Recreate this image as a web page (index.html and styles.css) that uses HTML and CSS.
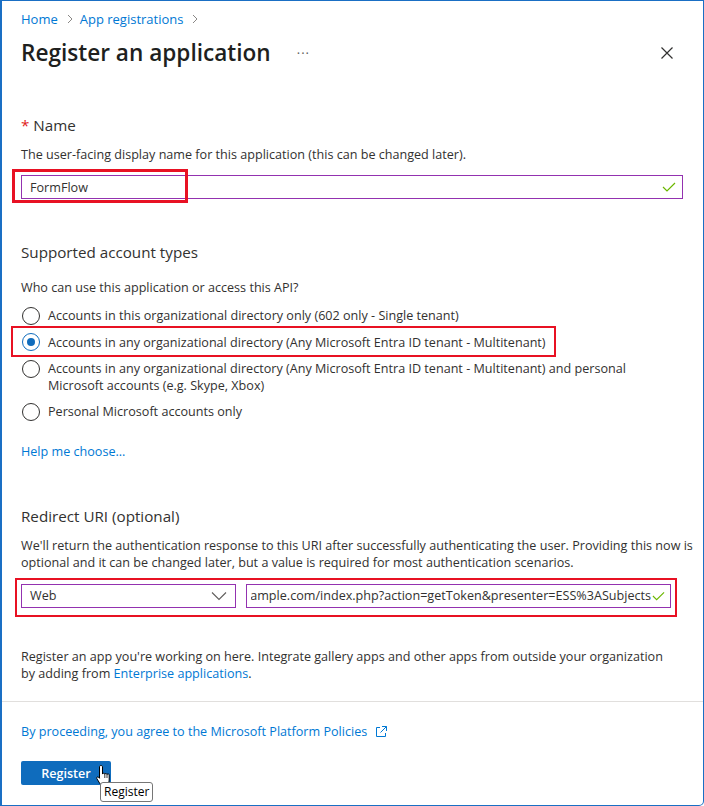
FILE: index.html
```html
<!DOCTYPE html>
<html lang="en">
<head>
<meta charset="utf-8">
<title>Register an application</title>
<link rel="stylesheet" href="styles.css">
</head>
<body>
<div class="window">
  <header class="head">
    <nav class="crumbs">
      <a class="link">Home</a>
      <svg class="chev" width="8" height="12" viewBox="0 0 8 12"><polyline points="2,2 6,6 2,10" fill="none" stroke="#8a8886" stroke-width="1"/></svg>
      <a class="link">App registrations</a>
      <svg class="chev" width="8" height="12" viewBox="0 0 8 12"><polyline points="2,2 6,6 2,10" fill="none" stroke="#8a8886" stroke-width="1"/></svg>
    </nav>
    <div class="title-row">
      <h1 class="title">Register an application</h1>
      <span class="more">···</span>
      <span class="spacer"></span>
      <svg class="close" width="14" height="14" viewBox="0 0 14 14"><path d="M1.5 1.5 L12.5 12.5 M12.5 1.5 L1.5 12.5" stroke="#323130" stroke-width="1.2" fill="none"/></svg>
    </div>
  </header>

  <main class="content">
    <section class="sec sec-name">
      <h2 class="label"><span class="req">*</span> Name</h2>
      <p class="desc">The user-facing display name for this application (this can be changed later).</p>
      <div class="field">
        <div class="input">
          <span class="val">FormFlow</span>
          <svg class="ok" width="14" height="10" viewBox="0 0 14 10"><polyline points="1,5 5,9 13,1" fill="none" stroke="#6bb700" stroke-width="1.2"/></svg>
        </div>
        <span class="hl hl-name"></span>
      </div>
    </section>

    <section class="sec sec-types">
      <h2 class="label">Supported account types</h2>
      <p class="desc">Who can use this application or access this API?</p>
      <div class="options">
        <div class="opt"><span class="radio"></span><span class="opt-text">Accounts in this organizational directory only (602 only - Single tenant)</span></div>
        <div class="opt opt-sel"><span class="radio on"></span><span class="opt-text">Accounts in any organizational directory (Any Microsoft Entra ID tenant - Multitenant)</span><span class="hl hl-opt"></span></div>
        <div class="opt"><span class="radio"></span><span class="opt-text">Accounts in any organizational directory (Any Microsoft Entra ID tenant - Multitenant) and personal Microsoft accounts (e.g. Skype, Xbox)</span></div>
        <div class="opt"><span class="radio"></span><span class="opt-text">Personal Microsoft accounts only</span></div>
      </div>
      <a class="link help">Help me choose...</a>
    </section>

    <section class="sec sec-redirect">
      <h2 class="label">Redirect URI (optional)</h2>
      <p class="desc wide">We'll return the authentication response to this URI after successfully authenticating the user. Providing this now is optional and it can be changed later, but a value is required for most authentication scenarios.</p>
      <div class="uri-row">
        <div class="select">
          <span class="val">Web</span>
          <svg class="dd" width="16" height="10" viewBox="0 0 16 10"><polyline points="1,1.5 8,8.5 15,1.5" fill="none" stroke="#605e5c" stroke-width="1.1"/></svg>
        </div>
        <div class="uri">
          <div class="uri-clip"><span class="uri-text">https://www.example.com/index.php?action=getToken&amp;presenter=ESS%3ASubjects</span></div>
          <svg class="ok" width="13" height="10" viewBox="0 0 14 10"><polyline points="1,5 5,9 13,1" fill="none" stroke="#6bb700" stroke-width="1.2"/></svg>
        </div>
      </div>
      <p class="note">Register an app you're working on here. Integrate gallery apps and other apps from outside your organization by adding from <a class="link">Enterprise applications</a>.</p>
    </section>
  </main>

  <footer class="foot">
    <p class="policy"><a class="link">By proceeding, you agree to the Microsoft Platform Policies</a>
      <svg class="ext" width="14" height="14" viewBox="0 0 14 14"><path d="M6 2.5 H2.5 V11.5 H11.5 V8 M8 1.5 H12.5 V6 M12.5 1.5 L6.5 7.5" fill="none" stroke="#0078d4" stroke-width="1"/></svg>
    </p>
    <div class="actions">
      <button class="btn">Register</button>
      <svg class="cursor" width="18" height="24" viewBox="0 0 18 24"><path d="M6 1.5 C6.9 1.5 7.5 2.1 7.5 3 V10 C7.5 9 9.8 9 9.8 10.3 C9.8 9.2 12 9.2 12 10.6 C12 9.6 14.2 9.6 14.2 11 V16 C14.2 19 12.6 21.5 10 21.5 H8.2 C6.5 21.5 5.5 20.6 4.5 19 L1.8 14.5 C1.2 13.5 2.5 12.3 3.5 13.2 L4.5 14.3 V3 C4.5 2.1 5.1 1.5 6 1.5 Z" fill="#ffffff" stroke="#000000" stroke-width="1"/><path d="M9.8 10.3 V14 M12 10.6 V14" stroke="#000" stroke-width="0.8"/></svg>
      <span class="tooltip">Register</span>
    </div>
  </footer>
</div>
</body>
</html>
```

FILE: styles.css
```css
* { box-sizing: border-box; }
html, body { margin: 0; padding: 0; background: #ffffff; }
body {
  font-family: "Segoe UI", "Open Sans", "Noto Sans", sans-serif;
  color: #323130;
  font-size: 12.6px;
}
.window {
  width: 704px;
  height: 806px;
  border: 1px solid #1a6fc4;
  border-left-width: 2px;
  border-bottom-right-radius: 5px;
  display: flex;
  flex-direction: column;
  overflow: hidden;
}
.link { color: #0078d4; text-decoration: none; }
p { margin: 0; }
h1, h2 { margin: 0; }

.head { padding: 9px 19px 0 19px; }
.crumbs { display: flex; align-items: center; height: 18px; gap: 4px; font-size: 13px; line-height: 18px; }
.crumbs .chev { margin: 0 2px 0 4px; }
.title-row { display: flex; align-items: center; height: 32px; margin-top: 9px; }
.title { font-size: 22.6px; font-weight: 600; line-height: 32px; color: #201f1e; }
.more { margin-left: 26px; color: #605e5c; font-size: 13px; letter-spacing: 1px; }
.spacer { flex: 1; }
.close { margin-right: 10px; }

.content { padding: 0 19px; flex: 1; }
.sec { display: flex; flex-direction: column; }
.label { font-size: 15.2px; font-weight: 400; line-height: 22px; color: #323130; }
.req { color: #e01a1a; }
.desc { line-height: 17px; margin-top: 9px; }

.sec-name { margin-top: 45px; }
.sec-name .desc { margin-top: 10px; }
.field { position: relative; margin-top: 12px; }
.input, .select, .uri {
  height: 24px;
  border: 1px solid #9332b0;
  display: flex;
  align-items: center;
  padding: 0 6px 0 8px;
}
.input { width: 662px; }
.input .val { flex: 1; }
.hl { position: absolute; border: 2px solid #e81123; pointer-events: none; }
.hl-name { left: -9px; top: -6px; width: 176px; height: 34px; border-width: 3px; }

.sec-types { margin-top: 42px; }
.sec-types .desc { margin-top: 16px; }
.options { display: flex; flex-direction: column; gap: 9px; margin-top: 11px; }
.opt { display: flex; align-items: flex-start; gap: 8px; line-height: 17px; position: relative; padding-left: 1px; }
.opt-sel { align-self: flex-start; }
.radio {
  width: 18px; height: 18px; border-radius: 50%;
  border: 1px solid #323130;
  flex: none;
  margin-top: -0.5px;
  display: flex; align-items: center; justify-content: center;
}
.radio.on { border-color: #0f6cbd; }
.radio.on::after { content: ""; width: 8px; height: 8px; border-radius: 50%; background: #0f6cbd; }
.opt-text { max-width: 600px; }
.hl-opt { left: -10px; top: -8px; right: -10px; bottom: -6px; }
.help { margin-top: 22px; line-height: 17px; }

.sec-redirect { margin-top: 45px; }
.sec-redirect .desc { margin-top: 10px; }
.sec-redirect .wide { margin-right: -14px; }
.uri-row {
  display: flex; gap: 10px;
  border: 2px solid #e81123;
  margin: 7px 0 0 -6px;
  padding: 4px 4px 7px 4px;
  width: 662px;
}
.select { width: 215px; }
.select .val { flex: 1; }
.dd { margin-right: 2px; }
.uri { width: 425px; padding-left: 4px; padding-right: 5px; }
.uri-clip { flex: 1; overflow: hidden; display: flex; justify-content: flex-end; white-space: nowrap; min-width: 0; }
.uri-text { flex: none; }
.uri .ok { flex: none; margin-left: 1px; }
.note { line-height: 17px; margin-top: 31px; max-width: 645px; }

.foot { border-top: 1px solid #e1dfdd; padding: 21px 19px 0 19px; height: 104px; }
.policy { line-height: 17px; display: flex; align-items: center; gap: 0; }
.policy .ext { margin-left: 7px; }
.actions { position: relative; margin-top: 21px; height: 24px; }
.btn {
  width: 90px; height: 24px;
  background: #0f6cbd;
  border: none; border-radius: 2px;
  color: #ffffff;
  font-family: inherit; font-size: 12.6px; font-weight: 600;
  padding: 0;
}
.cursor { position: absolute; left: 74px; top: 3px; }
.tooltip {
  position: absolute; left: 79px; top: 21px;
  border: 1px solid #767676; border-radius: 3px;
  background: #ffffff; color: #000000;
  font-size: 12px; line-height: 18px; padding: 0 3px;
}
```
